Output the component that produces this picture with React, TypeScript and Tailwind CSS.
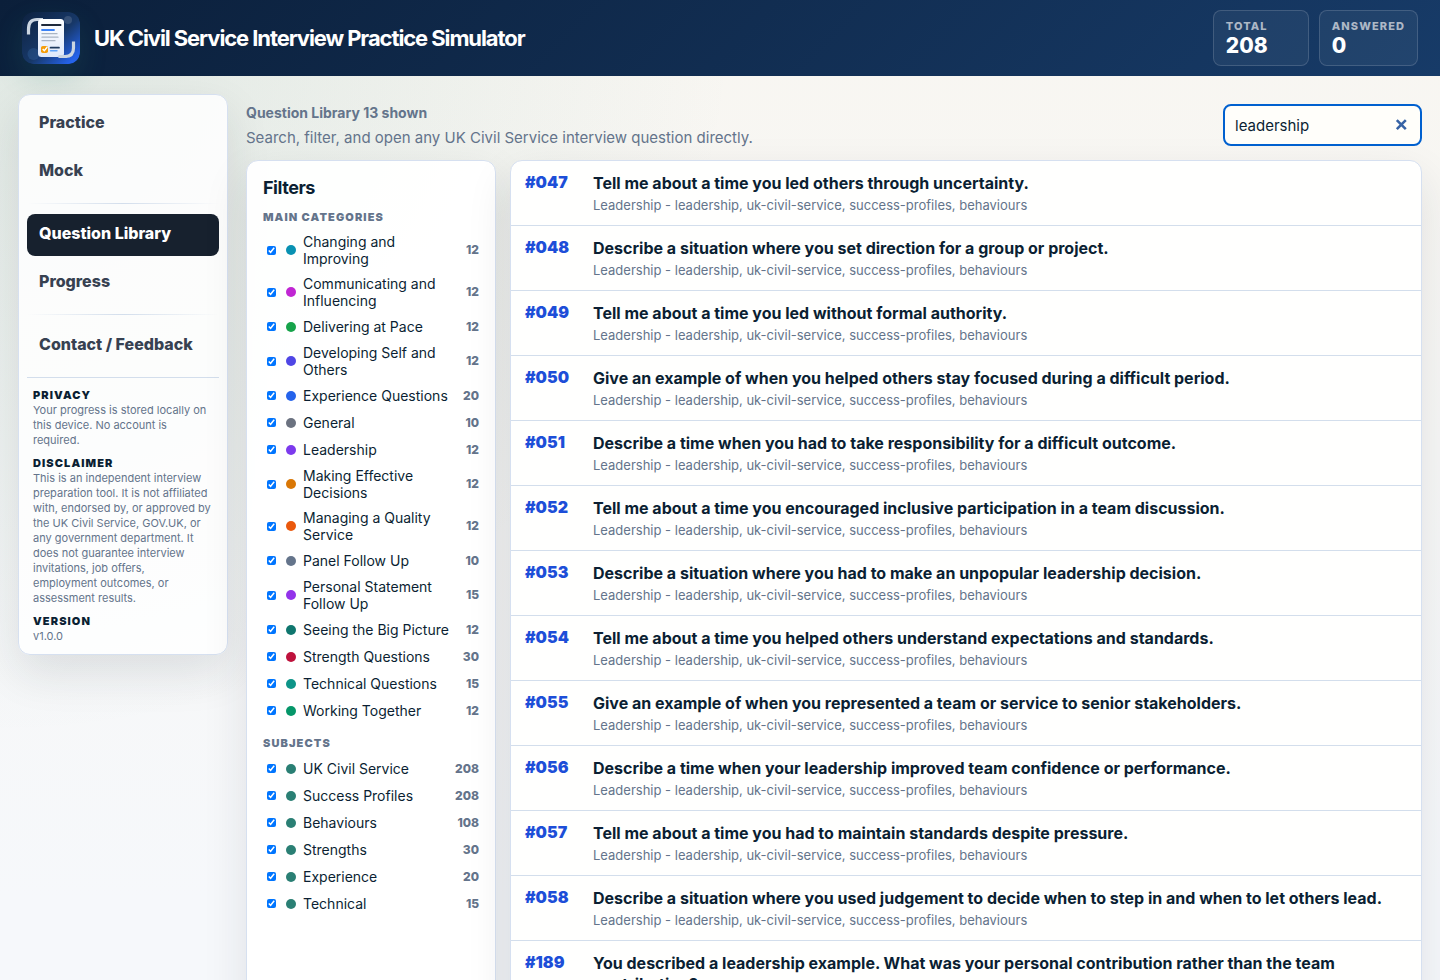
import { useState } from "react";

interface Question {
  id: string;
  title: string;
}

interface Filter {
  name: string;
  count: number;
  color: string;
}

const questions: Question[] = [
  { id: "047", title: "Tell me about a time you led others through uncertainty." },
  { id: "048", title: "Describe a situation where you set direction for a group or project." },
  { id: "049", title: "Tell me about a time you led without formal authority." },
  { id: "050", title: "Give an example of when you helped others stay focused during a difficult period." },
  { id: "051", title: "Describe a time when you had to take responsibility for a difficult outcome." },
  { id: "052", title: "Tell me about a time you encouraged inclusive participation in a team discussion." },
  { id: "053", title: "Describe a situation where you had to make an unpopular leadership decision." },
  { id: "054", title: "Tell me about a time you helped others understand expectations and standards." },
  { id: "055", title: "Give an example of when you represented a team or service to senior stakeholders." },
  { id: "056", title: "Describe a time when your leadership improved team confidence or performance." },
  { id: "057", title: "Tell me about a time you had to maintain standards despite pressure." },
  { id: "058", title: "Describe a situation where you used judgement to decide when to step in and when to let others lead." },
  { id: "189", title: "You described a leadership example. What was your personal contribution rather than the team contribution?" },
];

const categories: Filter[] = [
  { name: "Changing and Improving", count: 12, color: "bg-[#0891b2]" },
  { name: "Communicating and Influencing", count: 12, color: "bg-[#c026d3]" },
  { name: "Delivering at Pace", count: 12, color: "bg-[#16a34a]" },
  { name: "Developing Self and Others", count: 12, color: "bg-[#4f46e5]" },
  { name: "Experience Questions", count: 20, color: "bg-[#2563eb]" },
  { name: "General", count: 10, color: "bg-[#6b7280]" },
  { name: "Leadership", count: 12, color: "bg-[#7c3aed]" },
  { name: "Making Effective Decisions", count: 12, color: "bg-[#d97706]" },
  { name: "Managing a Quality Service", count: 12, color: "bg-[#ea580c]" },
  { name: "Panel Follow Up", count: 10, color: "bg-[#64748b]" },
  { name: "Personal Statement Follow Up", count: 15, color: "bg-[#9333ea]" },
  { name: "Seeing the Big Picture", count: 12, color: "bg-[#0f766e]" },
  { name: "Strength Questions", count: 30, color: "bg-[#be123c]" },
  { name: "Technical Questions", count: 15, color: "bg-[#0d9488]" },
  { name: "Working Together", count: 12, color: "bg-[#059669]" },
];

const subjects: Filter[] = [
  { name: "UK Civil Service", count: 208, color: "bg-[#2a7f74]" },
  { name: "Success Profiles", count: 208, color: "bg-[#2a7f74]" },
  { name: "Behaviours", count: 108, color: "bg-[#2a7f74]" },
  { name: "Strengths", count: 30, color: "bg-[#2a7f74]" },
  { name: "Experience", count: 20, color: "bg-[#2a7f74]" },
  { name: "Technical", count: 15, color: "bg-[#2a7f74]" },
];

const Logo = () => (
  <svg viewBox="0 0 58 52" className="h-[52px] w-[58px] rounded-xl shadow-[0_12px_28px_rgba(42,127,116,0.2)]" aria-hidden="true">
    <defs>
      <linearGradient id="tile" x1="0" y1="0" x2="1" y2="1">
        <stop offset="0" stopColor="#0e2240" />
        <stop offset="0.55" stopColor="#173868" />
        <stop offset="0.9" stopColor="#2563eb" />
      </linearGradient>
      <linearGradient id="paper" x1="0" y1="0" x2="0" y2="1">
        <stop offset="0" stopColor="#ffffff" />
        <stop offset="1" stopColor="#dfe9fb" />
      </linearGradient>
    </defs>
    <rect width="58" height="52" rx="10" fill="url(#tile)" />
    <circle cx="46" cy="8" r="4" fill="#fff" opacity="0.14" />
    <circle cx="11.500" cy="42" r="6" fill="#60a5fa" opacity="0.15" />
    <path d="M6.500 22.500V17Q6.500 7.500 15 7.500H21" fill="none" stroke="#cbd5e1" strokeWidth="3.200" />
    <path d="M51.500 29.500V36Q51.500 44.500 43 44.500H37" fill="none" stroke="#cbd5e1" strokeWidth="3.200" />
    <rect x="16" y="7" width="26" height="38" rx="3.500" fill="url(#paper)" />
    <path d="M37.500 44.500H44" stroke="#cbd5e1" strokeWidth="3" strokeLinecap="round" />
    <path d="M20 13H38.500" stroke="#1e293b" strokeWidth="2" strokeLinecap="round" />
    <path d="M20 18H32" stroke="#3b82f6" strokeWidth="1.800" strokeLinecap="round" />
    <path d="M20 21.700H35M20 25.200H36M20 28.700H33" stroke="#a9b4c4" strokeWidth="1.300" strokeLinecap="round" />
    <rect x="19" y="34" width="7" height="7" rx="1.800" fill="#f59e0b" />
    <path d="M20.700 37L22.300 38.700L25.300 35" fill="none" stroke="#fff" strokeWidth="1.400" />
    <path d="M28.500 35.700H37" stroke="#1e3a5f" strokeWidth="1.700" strokeLinecap="round" />
    <path d="M28.500 38.700H35" stroke="#60a5fa" strokeWidth="1.400" strokeLinecap="round" />
  </svg>
);

const Stat = ({ label, value }: { label: string; value: number }) => (
  <div className="min-w-24 rounded-lg border border-white/15 bg-white/5 px-3 pt-2 pb-1.5">
    <div className="text-[11px] leading-[14px] font-extrabold tracking-widest text-[#adb8c6] uppercase">{label}</div>
    <div className="text-[21px] leading-[26px] font-extrabold text-white">{value}</div>
  </div>
);

const NavItem = ({ label, active = false }: { label: string; active?: boolean }) => (
  <button
    type="button"
    aria-current={active ? "page" : undefined}
    className={`block h-[42px] w-full rounded-lg px-3 pb-1 text-left text-base font-extrabold ${
      active ? "bg-[#17212e] text-white" : "text-[#374151]"
    }`}
  >
    {label}
  </button>
);

const NavDivider = () => <div className="my-1 h-px bg-linear-to-r from-transparent via-[#d3deec] to-transparent" />;

const Note = ({ title, children }: { title: string; children: React.ReactNode }) => (
  <section>
    <h2 className="text-[11px] leading-[15px] font-black tracking-widest text-[#0b1f33] uppercase">{title}</h2>
    <p className="text-[11px] leading-[15px] text-[#64748b]">{children}</p>
  </section>
);

const FilterGroup = ({ title, items }: { title: string; items: Filter[] }) => (
  <fieldset>
    <legend className="text-[11px] leading-4 font-black tracking-widest text-[#64748b] uppercase">{title}</legend>
    <div className="pt-1">
      {items.map((item) => (
        <label key={item.name} className="flex min-h-[27px] items-center py-1 pl-1 text-sm leading-[17px] text-[#0b1f33]">
          <input type="checkbox" defaultChecked className="mr-2.5 size-[9px] shrink-0 accent-[#0075ff]" />
          <span className={`mr-[7px] size-2.5 shrink-0 rounded-full ${item.color}`} />
          <span className="flex-1">{item.name}</span>
          <span className="ml-0.5 min-w-6 text-right text-xs font-extrabold text-[#64748b]">{item.count}</span>
        </label>
      ))}
    </div>
  </fieldset>
);

const App = () => {
  const [search, setSearch] = useState("leadership");

  return (
    <div className="min-h-screen bg-[radial-gradient(circle_at_top_left,rgba(42,127,116,0.12),transparent_740px),linear-gradient(180deg,#f8f6f1_0px,#f6f8fb_900px)] font-['Inter',sans-serif] text-[#0b1f33]">
      <header className="flex h-[76px] items-center justify-between bg-linear-135 from-[#0b1f3a] to-[#173b68] px-[22px]">
        <div className="flex items-center gap-3.5">
          <Logo />
          <h1 className="text-[22px] leading-7 font-bold tracking-tighter text-white">
            UK Civil Service Interview Practice Simulator
          </h1>
        </div>
        <div className="flex gap-2.5">
          <Stat label="Total" value={208} />
          <Stat label="Answered" value={0} />
        </div>
      </header>

      <div className="flex items-start gap-[18px] p-[18px]">
        <aside className="w-[210px] shrink-0 rounded-xl border border-[#d6e0f0] bg-white/85 p-2 shadow-[0_18px_45px_rgba(23,33,43,0.11)]">
          <nav className="flex flex-col gap-1.5">
            <NavItem label="Practice" />
            <NavItem label="Mock" />
            <NavDivider />
            <NavItem label="Question Library" active />
            <NavItem label="Progress" />
            <NavDivider />
            <NavItem label="Contact / Feedback" />
          </nav>
          <div className="mt-2.5 flex flex-col gap-2 border-t border-[#d3deec] px-1.5 pt-2.5 pb-0.5">
            <Note title="Privacy">Your progress is stored locally on this device. No account is required.</Note>
            <Note title="Disclaimer">
              This is an independent interview preparation tool. It is not affiliated with, endorsed by, or approved by
              the UK Civil Service, GOV.UK, or any government department. It does not guarantee interview invitations,
              job offers,
              <br />
              employment outcomes, or
              <br />
              assessment results.
            </Note>
            <Note title="Version">v1.0.0</Note>
          </div>
        </aside>

        <main className="min-w-0 flex-1">
          <div className="flex items-start justify-between pt-2.5 pb-2.5">
            <div>
              <div className="text-sm leading-[18px] font-bold text-[#64748b]">Question Library 13 shown</div>
              <p className="pt-1 text-[15px] leading-6 text-[#64748b]">
                Search, filter, and open any UK Civil Service interview question directly.
              </p>
            </div>
            <div className="relative">
              <input
                type="text"
                aria-label="Search questions"
                value={search}
                onChange={(e) => setSearch(e.target.value)}
                className="h-[42px] w-[199px] rounded-lg border-2 border-[#0060cf] bg-[#fffefa] pr-8 pl-2.5 text-[15px] text-[#0b1f33] outline-none"
              />
              <button
                type="button"
                aria-label="Clear search"
                onClick={() => setSearch("")}
                className="absolute top-[15px] right-[15px] size-3"
              >
                <svg viewBox="0 0 12 12" className="size-3" fill="none" stroke="#3763a5" strokeWidth="2.600">
                  <path d="M1.800 1.200L10.800 10.200M10.800 1.200L1.800 10.200" />
                </svg>
              </button>
            </div>
          </div>

          <div className="flex gap-3.5">
            <aside className="w-[250px] shrink-0 rounded-xl border border-[#d6e0f0] bg-white/95 p-4 shadow-[0_18px_45px_rgba(23,33,43,0.11)]">
              <h2 className="pb-2.5 text-lg leading-[22px] font-bold tracking-tight">Filters</h2>
              <div className="flex flex-col gap-[11px]">
                <FilterGroup title="Main Categories" items={categories} />
                <FilterGroup title="Subjects" items={subjects} />
              </div>
            </aside>

            <section className="min-w-0 flex-1 rounded-xl border border-[#d6e0f0] bg-[#fffffe] shadow-[0_18px_45px_rgba(23,33,43,0.11)]">
              {questions.map((q) => (
                <button
                  key={q.id}
                  type="button"
                  className="flex w-full border-b border-[#d3deec] px-3.5 pt-3 pb-[11px] text-left last:border-b-0"
                >
                  <span className="w-[68px] shrink-0 text-base leading-[18px] font-black text-[#1d4ed8]">#{q.id}</span>
                  <span>
                    <span className="block text-base leading-[21px] font-bold">{q.title}</span>
                    <span className="block pt-[3px] text-[13px] leading-[17px] text-[#64748b]">
                      Leadership - leadership, uk-civil-service, success-profiles, behaviours
                    </span>
                  </span>
                </button>
              ))}
            </section>
          </div>
        </main>
      </div>
    </div>
  );
};

export default App;
